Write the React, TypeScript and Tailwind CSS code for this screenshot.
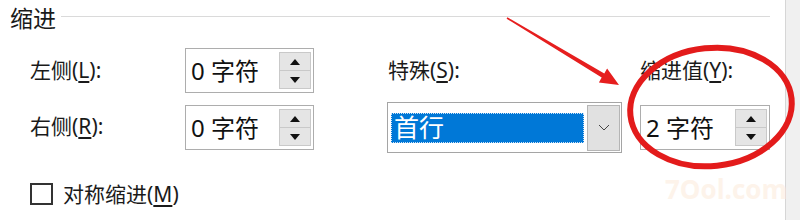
import React from "react";

const font = { fontFamily: '"Noto Sans", "Noto Sans CJK SC", sans-serif' };

//Spin box (number + unit with up/down buttons)
function SpinBox({ value, width }: { value: string; width: string }) {
  return (
    <div className={`${width} h-[45px] flex items-stretch border border-[#adadad] bg-white`}>
      <div className="flex-1 flex items-center pl-[5px] text-[24px] text-[#111] leading-none">{value}</div>
      <div className="w-[32px] my-[3px] mr-[2px] flex flex-col">
        <div className="flex-1 flex items-center justify-center bg-[#e5e5e5] border border-[#c9c9c9]">
          <svg width="10" height="6" viewBox="0 0 10 6"><path d="M0 6 L5 0 L10 6 Z" fill="#111" /></svg>
        </div>
        <div className="flex-1 flex items-center justify-center bg-[#e5e5e5] border border-t-0 border-[#c9c9c9]">
          <svg width="10" height="6" viewBox="0 0 10 6"><path d="M0 0 L5 6 L10 0 Z" fill="#111" /></svg>
        </div>
      </div>
    </div>
  );
}

function Label({ text, mnemonic, colon = true }: { text: string; mnemonic: string; colon?: boolean }) {
  return (
    <span className="text-[21px] text-[#1a1a1a] leading-none whitespace-nowrap">
      {text}(<span className="underline underline-offset-[3px]">{mnemonic}</span>){colon ? ":" : ""}
    </span>
  );
}

export default function App() {
  return (
    <div className="w-[800px] h-[220px] bg-white relative overflow-hidden flex" style={font}>
      <div className="w-[785px] flex flex-col">
        {/* header */}
        <div className="h-[32px] flex items-start pl-[10px] pt-[7px]">
          <span className="text-[23px] text-[#1a1a1a] leading-none">缩进</span>
          <div className="flex-1 h-px bg-[#dadada] mt-[9px] ml-[5px] mr-[15px]" />
        </div>

        {/* row 1 */}
        <div className="mt-[16px] h-[45px] flex items-center pl-[30px]">
          <div className="w-[155px] pt-[3px]"><Label text="左侧" mnemonic="L" /></div>
          <SpinBox value="0 字符" width="w-[129px]" />
          <div className="w-[73px]" />
          <div className="w-[235px] pl-[1px] pt-[3px]"><Label text="特殊" mnemonic="S" /></div>
          <div className="w-[18px]" />
          <div className="w-[130px] pt-[3px]"><Label text="缩进值" mnemonic="Y" /></div>
        </div>

        {/* row 2 */}
        <div className="mt-[9px] h-[51px] flex items-center pl-[30px]">
          <div className="w-[155px]"><Label text="右侧" mnemonic="R" /></div>
          <SpinBox value="0 字符" width="w-[129px]" />
          <div className="w-[73px]" />
          <div className="w-[235px] h-[51px] border border-[#a5a5a5] bg-white flex items-center pl-[3px] pr-[1px]">
            <div className="w-[193px] h-[30px] bg-[#0078d7] border border-dotted border-[#cfe3f7] flex items-center pl-[2px] text-[25px] text-white leading-none">
              首行
            </div>
            <div className="ml-auto w-[33px] h-[46px] bg-[#e1e1e1] border border-[#b5b5b5] flex items-center justify-center">
              <svg width="12" height="7" viewBox="0 0 12 7"><path d="M1 1 L6 6 L11 1" fill="none" stroke="#444" strokeWidth="1" /></svg>
            </div>
          </div>
          <div className="w-[18px]" />
          <SpinBox value="2 字符" width="w-[130px]" />
        </div>

        {/* row 3 */}
        <div className="mt-[30px] flex items-center pl-[30px] gap-[10px]">
          <div className="w-[23px] h-[22px] border-2 border-[#333] bg-white" />
          <Label text="对称缩进" mnemonic="M" colon={false} />
        </div>
      </div>

      {/* right edge strip */}
      <div className="w-[15px] bg-[#f0f0f0] border-l border-[#d6d6d6]" />

      {/* watermark */}
      <div className="absolute left-[665px] top-[176px] text-[26px] font-bold text-[#fdf3ea] leading-none" style={{ fontFamily: '"Open Sans", sans-serif' }}>
        7Ool.com
      </div>

      {/* red annotation */}
      <svg className="absolute left-0 top-0 pointer-events-none" width="800" height="220" viewBox="0 0 800 220">
        <polygon
          points="507.4,17.3 604.3,73.4 607.1,68.6 619,85 598.9,82.4 601.7,77.6 506.6,18.7"
          fill="#e61e1e"
        />
        <ellipse cx="711" cy="107" rx="81" ry="59" fill="none" stroke="#e31b1b" strokeWidth="6" transform="rotate(-6 711 107)" />
      </svg>
    </div>
  );
}
